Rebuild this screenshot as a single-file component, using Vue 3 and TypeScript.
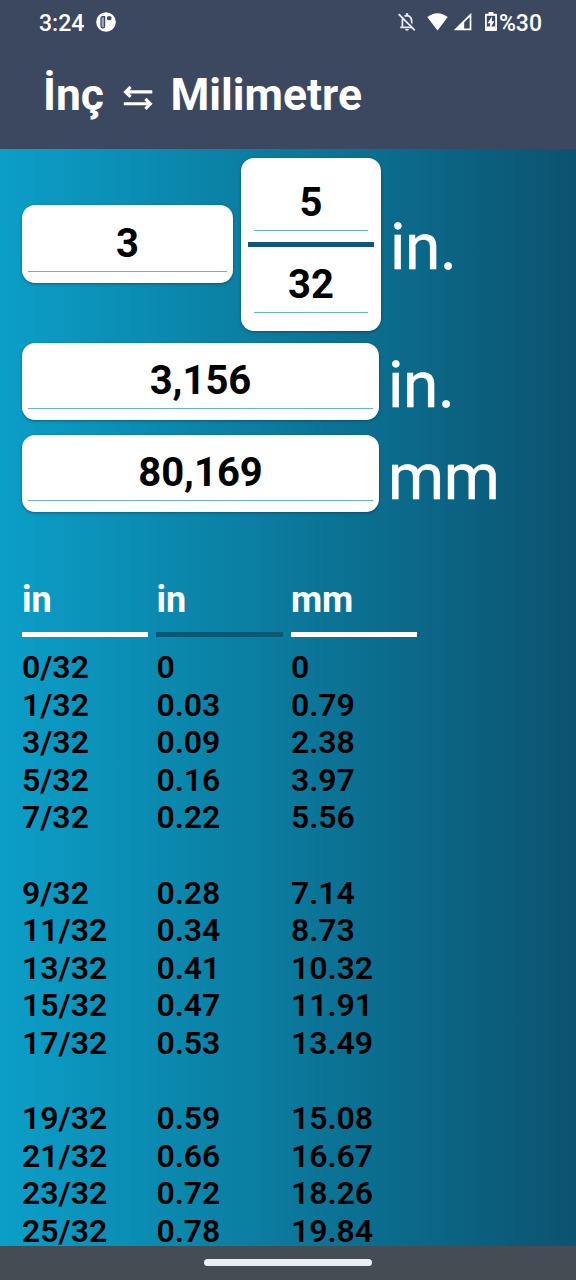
<script setup lang="ts">
interface Column {
  label: string
  dark: boolean
  groups: string[][]
}

const columns: Column[] = [
  {
    label: 'in',
    dark: false,
    groups: [
      ['0/32', '1/32', '3/32', '5/32', '7/32'],
      ['9/32', '11/32', '13/32', '15/32', '17/32'],
      ['19/32', '21/32', '23/32', '25/32'],
    ],
  },
  {
    label: 'in',
    dark: true,
    groups: [
      ['0', '0.03', '0.09', '0.16', '0.22'],
      ['0.28', '0.34', '0.41', '0.47', '0.53'],
      ['0.59', '0.66', '0.72', '0.78'],
    ],
  },
  {
    label: 'mm',
    dark: false,
    groups: [
      ['0', '0.79', '2.38', '3.97', '5.56'],
      ['7.14', '8.73', '10.32', '11.91', '13.49'],
      ['15.08', '16.67', '18.26', '19.84'],
    ],
  },
]
</script>

<template>
  <div class="screen">
    <header class="top">
      <div class="status">
        <span class="clock">3:24</span>
        <svg class="badge" width="20" height="20" viewBox="0 0 20 20">
          <circle cx="10" cy="10" r="9.8" fill="#fff" />
          <path d="M8.6 4.6H6.6Q5 4.6 5 6.2V14.2Q5 15.8 6.6 15.8H7.2Q8.6 15.8 8.6 14.2Z" fill="#9ba3b3" stroke="#3c4760" stroke-width="1.2" />
          <rect x="11" y="4.2" width="4.4" height="4" rx="1.4" fill="#3c4760" />
        </svg>
        <div class="indicators">
          <svg class="bell" width="18" height="20" viewBox="0 0 18 20">
            <path d="M4.4 15V8.6Q4.6 4.3 9 3.7Q13.3 4.3 13.6 8.6V15M2.3 15.3H15.8" fill="none" stroke="#e9ecf3" stroke-width="1.8" />
            <path d="M9 1.2V3.6" stroke="#e9ecf3" stroke-width="2.4" />
            <path d="M7 17H11Q10.8 18.8 9 18.8Q7.2 18.8 7 17Z" fill="#e9ecf3" />
            <path d="M2.2 1.2L18 17" stroke="#3c4760" stroke-width="1.8" />
            <path d="M.7 2.2L16.8 18.3" stroke="#e9ecf3" stroke-width="1.8" />
          </svg>
          <svg class="wifi" width="21" height="18" viewBox="0 0 21 18">
            <path d="M.2 4.1Q10.5-3.5 20.8 4.1L10.5 17.4Z" fill="#fff" />
          </svg>
          <svg class="signal" width="18" height="18" viewBox="0 0 18 18">
            <path d="M1.8 16.4L16.5 1.8V16.4Z" fill="none" stroke="#fff" stroke-width="1.7" />
            <path d="M1 17L10.2 8V17Z" fill="#fff" />
          </svg>
          <svg class="battery" width="12" height="19" viewBox="0 0 12 19">
            <path d="M3.6 0H8.4V1.8H11Q12 1.8 12 2.8V18Q12 19 11 19H1Q0 19 0 18V2.8Q0 1.8 1 1.8H3.6Z" fill="#fff" />
            <path d="M1.8 3.8H10.2V17H1.8Z" fill="#3c4760" />
            <path d="M1.8 14.5H10.2V17H1.8Z" fill="#fff" />
            <path d="M6.9 4.4L2.6 11.2H5.1V16.2L9.4 9.2H6.9Z" fill="#fff" />
          </svg>
          <span class="percent">%30</span>
        </div>
      </div>
      <h1 class="title">
        <span>İnç</span>
        <svg class="swap" width="30" height="26" viewBox="0 0 30 26">
          <path d="M29.3 6.9H3M7.6 1.9L2.6 6.9L7.6 11.9M.8 18.8H27M22.4 13.8L27.4 18.8L22.4 23.8" fill="none" stroke="#fff" stroke-width="3.1" />
        </svg>
        <span>Milimetre</span>
      </h1>
    </header>

    <main class="body">
      <section class="mixed">
        <div class="card whole"><div class="field">3</div></div>
        <div class="card fraction">
          <div class="field">5</div>
          <div class="bar"></div>
          <div class="field">32</div>
        </div>
        <span class="unit">in.</span>
      </section>
      <section class="line">
        <div class="card wide"><div class="field">3,156</div></div>
        <span class="unit">in.</span>
      </section>
      <section class="line metric">
        <div class="card wide"><div class="field">80,169</div></div>
        <span class="unit">mm</span>
      </section>

      <section class="table">
        <div v-for="(col, c) in columns" :key="c" class="column">
          <div class="heading">{{ col.label }}</div>
          <div class="rule" :class="{ dark: col.dark }"></div>
          <div v-for="(group, g) in col.groups" :key="g" class="group">
            <div v-for="value in group" :key="value" class="value">{{ value }}</div>
          </div>
        </div>
      </section>
    </main>

    <footer class="nav"><div class="handle"></div></footer>
  </div>
</template>

<style>
body {
  margin: 0;
}
</style>

<style scoped>
.screen {
  width: 576px;
  height: 1280px;
  display: flex;
  flex-direction: column;
  overflow: hidden;
  font-family: Roboto, "Liberation Sans", sans-serif;
  color: #000;
}
.top {
  height: 149px;
  flex: none;
  background: #3c4760;
  color: #fff;
}
.status {
  height: 46px;
  padding: 0 34px 0 39px;
  display: flex;
  align-items: center;
  font-size: 23px;
  font-weight: 500;
}
.clock {
  width: 45px;
}
.badge {
  margin-left: 12px;
  margin-top: -2px;
}
.indicators {
  margin-left: auto;
  display: flex;
  align-items: center;
}
.bell {
  margin-right: 11px;
  margin-top: -3px;
}
.wifi {
  margin-right: 6px;
  margin-top: -3px;
}
.signal {
  margin-right: 13px;
  margin-top: -2px;
}
.battery {
  margin-right: 2px;
  margin-top: -3px;
}
.title {
  margin: 0;
  padding: 23px 0 0 43px;
  display: flex;
  font-size: 44.4px;
  font-weight: 700;
  line-height: 53px;
}
.swap {
  margin: 16px 17.5px 0 19px;
}
.body {
  flex: 1;
  min-height: 0;
  overflow: hidden;
  padding: 8.5px 22px 0;
  background: linear-gradient(90deg, #0b9fc8 0%, #0b799c 50%, #0b5370 100%);
}
.mixed {
  display: flex;
  align-items: center;
  height: 173px;
}
.card {
  box-sizing: border-box;
  background: #fff;
  border-radius: 13px;
  box-shadow: 0 1px 3px rgba(0, 35, 60, 0.45);
}
.field {
  height: 65px;
  box-sizing: border-box;
  border-bottom: 1.5px solid #68b4cb;
  font-size: 40px;
  font-weight: 700;
  line-height: 74px;
  text-align: center;
}
.whole {
  width: 211px;
  height: 77.5px;
  padding: 1.5px 6px 0;
}
.fraction {
  width: 140px;
  height: 173px;
  margin-left: 8px;
  padding: 8.5px 7px 0;
}
.fraction .field {
  margin: 0 6px;
}
.fraction .bar {
  height: 5px;
  margin-top: 11px;
}
.fraction .bar + .field {
  margin-top: 1px;
}
.bar {
  background: #0d587a;
}
.unit {
  font-size: 64px;
  line-height: 75px;
  color: #fff;
  margin-left: 9px;
  letter-spacing: -0.5px;
  -webkit-text-stroke: 0.5px #fff;
}
.mixed .unit {
  margin-top: 6px;
}
.line {
  display: flex;
  height: 77.5px;
  margin-top: 12px;
}
.line .unit {
  margin-top: 5px;
}
.line.metric {
  margin-top: 14.5px;
}
.wide {
  width: 357px;
  padding: 1px 6px 0;
}
.table {
  display: flex;
  gap: 8px;
  margin: 69.5px 0 0 -0.5px;
}
.column {
  width: 126.5px;
}
.heading {
  height: 50px;
  padding-left: 0.4px;
  font-size: 36px;
  font-weight: 700;
  line-height: 37px;
  color: #fff;
}
.rule {
  height: 5px;
  background: #fff;
  margin-bottom: 12.5px;
}
.rule.dark {
  background: #095876;
}
.group {
  margin-bottom: 37.6px;
  padding-left: 0.4px;
}
.value {
  font-size: 32px;
  font-weight: 600;
  line-height: 37.6px;
}
.nav {
  display: flex;
  height: 34px;
  flex: none;
  background: #444c54;
}
.handle {
  width: 168px;
  height: 7px;
  margin: 12.5px auto 0;
  border-radius: 4px;
  background: #edf1f4;
}
</style>
